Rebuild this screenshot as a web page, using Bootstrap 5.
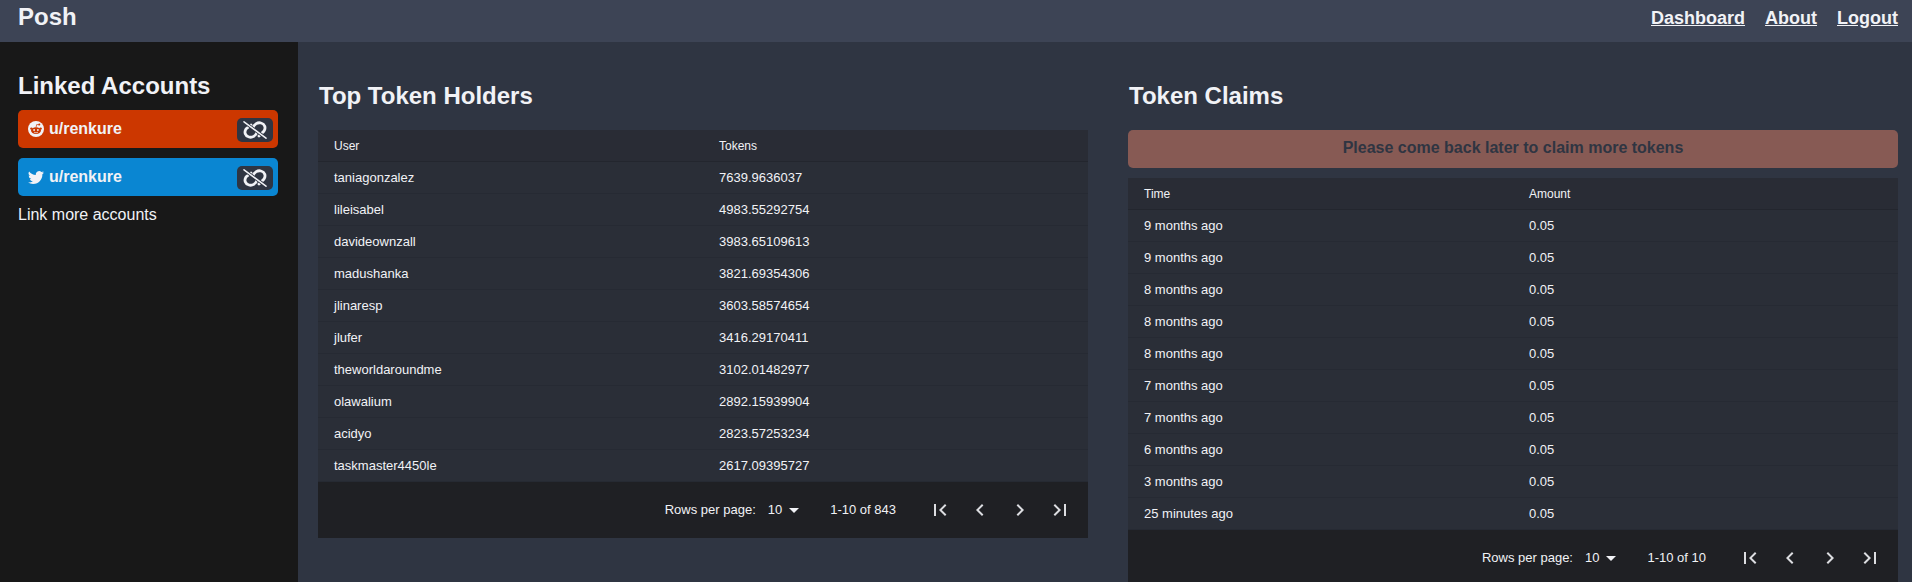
<!DOCTYPE html>
<html lang="en"><head><meta charset="utf-8"><title>Posh</title>
<link href="https://cdn.jsdelivr.net/npm/bootstrap@5.3.0/dist/css/bootstrap.min.css" rel="stylesheet">
<style>
html,body{height:582px;overflow:hidden}
body{font-family:"Liberation Sans",Arial,sans-serif;background:#2f3542;color:#f1f2f6}
.topbar{height:42px;background:#3d4455;padding:0 14px 0 18px}
.brand-name{font-size:24px;font-weight:700;color:#f1f2f6;line-height:34px}
.toplink{font-size:18px;font-weight:700;color:#f1f2f6;text-decoration:underline;line-height:36px}
.toplink:hover{color:#f1f2f6}
.nav-gap{gap:20px}
.shell{height:540px}
.side{width:298px;background:#181818;padding:30px 20px 0 18px;flex:none}
.side-title{font-size:24px;font-weight:700;line-height:28px;margin:0 0 10px}
.acct{height:38px;border-radius:5px;margin-bottom:10px;padding:0 5px 0 10px;color:#f1f2f6;font-size:16px;font-weight:700}
.acct-r{background:#cc3700}
.acct-t{background:#0a86d2}
.acct-name{gap:5px}
.unlink-btn{width:36px;height:24px;background:#2f3542;border-radius:5px;border:0;padding:0;margin-top:2px}
.more{font-size:16px;color:#f1f2f6;line-height:18px}
.content{padding:0 14px 0 20px;gap:40px;min-width:0}
.pane{width:770px;flex:none}
.pane-title{font-size:24px;font-weight:700;line-height:28px;margin:0;padding:40px 0 20px 1px}
.claim{height:38px;background:#875a54;color:#2f3542;font-size:16px;font-weight:700;border-radius:5px;text-align:center;line-height:36px;margin-bottom:10px}
.dtable{width:100%;table-layout:fixed;border-collapse:separate;border-spacing:0;background:#2a2e37}
.dtable th{height:32px;font-size:12px;font-weight:400;padding:0 16px;background:#292c35;border-bottom:1px solid #23262e;color:#f1f2f6}
.dtable td{height:32px;font-size:13px;padding:0 16px;border-bottom:1px solid #262a33;color:#f1f2f6}
.pager{height:56px;background:#1f2024;font-size:13px;color:#f1f2f6;padding-right:8px}
.rpp-label{margin:0 4px}
.rpp{margin-left:8px}
.rng{margin:0 24px}
.pg-btn{width:40px;height:40px;background:none;border:0;padding:8px;line-height:0}
.pg-btn svg{fill:#f1f2f6;opacity:.9}
</style></head><body>
<nav class="topbar d-flex justify-content-between align-items-start">
<span class="brand-name">Posh</span>
<div class="d-flex nav-gap"><a class="toplink" href="#">Dashboard</a><a class="toplink" href="#">About</a><a class="toplink" href="#">Logout</a></div>
</nav>
<div class="shell d-flex">
<aside class="side">
<h2 class="side-title">Linked Accounts</h2>
<div class="acct acct-r d-flex align-items-center justify-content-between">
<span class="d-flex align-items-center acct-name">
<svg width="16" height="16" viewBox="0 0 16 16"><circle cx="8" cy="8" r="8" fill="#f1f2f6"/><ellipse cx="8" cy="9.600" rx="5" ry="3.300" fill="#cc3700"/><circle cx="3.400" cy="7.600" r="1.200" fill="#cc3700"/><circle cx="12.600" cy="7.600" r="1.200" fill="#cc3700"/><circle cx="11.300" cy="3.600" r="1" fill="#cc3700"/><path d="M8 6.500 8.700 3.500 11 3.800" stroke="#cc3700" stroke-width=".7" fill="none"/><circle cx="6.100" cy="9" r=".9" fill="#f1f2f6"/><circle cx="9.900" cy="9" r=".9" fill="#f1f2f6"/><path d="M6 11.200q2 1.200 4 0" stroke="#f1f2f6" stroke-width=".7" fill="none"/></svg>
u/renkure</span>
<button class="unlink-btn d-flex align-items-center justify-content-center" aria-label="Unlink"><svg width="24" height="18" viewBox="0 0 24 18" fill="none" stroke-linecap="round"><path d="M10 7C11 3 15 1 18 2 22 3 23 7 21 10L16 15" stroke="#f1f2f6" stroke-width="2.800"/><path d="M14 11C13 15 9 17 6 16 2 15 1 11 3 8L8 4" stroke="#f1f2f6" stroke-width="2.800"/><path d="M1 1 23 17" stroke="#2f3542" stroke-width="3.400"/><path d="M1 .8 23 17.200" stroke="#f1f2f6" stroke-width="1.500"/></svg></button>
</div>
<div class="acct acct-t d-flex align-items-center justify-content-between">
<span class="d-flex align-items-center acct-name">
<svg width="16" height="16" viewBox="0 0 16 16" fill="#f1f2f6"><path d="M5.026 15c6.038 0 9.341-5.003 9.341-9.334 0-.14 0-.282-.006-.422A6.685 6.685 0 0 0 16 3.542a6.658 6.658 0 0 1-1.889.518 3.301 3.301 0 0 0 1.447-1.817 6.533 6.533 0 0 1-2.087.793A3.286 3.286 0 0 0 7.875 6.030a9.325 9.325 0 0 1-6.767-3.429 3.289 3.289 0 0 0 1.018 4.382A3.323 3.323 0 0 1 .64 6.575v.045a3.288 3.288 0 0 0 2.632 3.218 3.203 3.203 0 0 1-.865.115 3.230 3.230 0 0 1-.614-.057 3.283 3.283 0 0 0 3.067 2.277A6.588 6.588 0 0 1 .78 13.580a6.320 6.320 0 0 1-.78-.045A9.344 9.344 0 0 0 5.026 15z"/></svg>
u/renkure</span>
<button class="unlink-btn d-flex align-items-center justify-content-center" aria-label="Unlink"><svg width="24" height="18" viewBox="0 0 24 18" fill="none" stroke-linecap="round"><path d="M10 7C11 3 15 1 18 2 22 3 23 7 21 10L16 15" stroke="#f1f2f6" stroke-width="2.800"/><path d="M14 11C13 15 9 17 6 16 2 15 1 11 3 8L8 4" stroke="#f1f2f6" stroke-width="2.800"/><path d="M1 1 23 17" stroke="#2f3542" stroke-width="3.400"/><path d="M1 .8 23 17.200" stroke="#f1f2f6" stroke-width="1.500"/></svg></button>
</div>
<div class="more">Link more accounts</div>
</aside>
<main class="content d-flex flex-grow-1">
<section class="pane">
<h2 class="pane-title">Top Token Holders</h2>
<table class="dtable"><thead><tr><th>User</th><th>Tokens</th></tr></thead><tbody>
<tr><td>taniagonzalez</td><td>7639.9636037</td></tr>
<tr><td>lileisabel</td><td>4983.55292754</td></tr>
<tr><td>davideownzall</td><td>3983.65109613</td></tr>
<tr><td>madushanka</td><td>3821.69354306</td></tr>
<tr><td>jlinaresp</td><td>3603.58574654</td></tr>
<tr><td>jlufer</td><td>3416.29170411</td></tr>
<tr><td>theworldaroundme</td><td>3102.01482977</td></tr>
<tr><td>olawalium</td><td>2892.15939904</td></tr>
<tr><td>acidyo</td><td>2823.57253234</td></tr>
<tr><td>taskmaster4450le</td><td>2617.09395727</td></tr>
</tbody></table>
<div class="pager d-flex align-items-center justify-content-end">
<span class="rpp-label">Rows per page:</span>
<span class="rpp d-flex align-items-center">10<svg width="24" height="24" viewBox="0 0 24 24" fill="#f1f2f6"><path d="M7 10l5 5 5-5z"/></svg></span>
<span class="rng">1-10 of 843</span>
<div class="d-flex">
<button class="pg-btn" aria-label="First"><svg width="24" height="24" viewBox="0 0 24 24"><path d="M18.41 16.59L13.82 12l4.59-4.59L17 6l-6 6 6 6zM6 6h2v12H6z"/></svg></button>
<button class="pg-btn" aria-label="Previous"><svg width="24" height="24" viewBox="0 0 24 24"><path d="M15.41 7.41L14 6l-6 6 6 6 1.41-1.41L10.83 12z"/></svg></button>
<button class="pg-btn" aria-label="Next"><svg width="24" height="24" viewBox="0 0 24 24"><path d="M10 6L8.59 7.41 13.17 12l-4.58 4.59L10 18l6-6z"/></svg></button>
<button class="pg-btn" aria-label="Last"><svg width="24" height="24" viewBox="0 0 24 24"><path d="M5.59 7.41L10.18 12l-4.59 4.59L7 18l6-6-6-6zM16 6h2v12h-2z"/></svg></button>
</div></div>
</section>
<section class="pane">
<h2 class="pane-title">Token Claims</h2>
<div class="claim">Please come back later to claim more tokens</div>
<table class="dtable"><thead><tr><th>Time</th><th>Amount</th></tr></thead><tbody>
<tr><td>9 months ago</td><td>0.05</td></tr>
<tr><td>9 months ago</td><td>0.05</td></tr>
<tr><td>8 months ago</td><td>0.05</td></tr>
<tr><td>8 months ago</td><td>0.05</td></tr>
<tr><td>8 months ago</td><td>0.05</td></tr>
<tr><td>7 months ago</td><td>0.05</td></tr>
<tr><td>7 months ago</td><td>0.05</td></tr>
<tr><td>6 months ago</td><td>0.05</td></tr>
<tr><td>3 months ago</td><td>0.05</td></tr>
<tr><td>25 minutes ago</td><td>0.05</td></tr>
</tbody></table>
<div class="pager d-flex align-items-center justify-content-end">
<span class="rpp-label">Rows per page:</span>
<span class="rpp d-flex align-items-center">10<svg width="24" height="24" viewBox="0 0 24 24" fill="#f1f2f6"><path d="M7 10l5 5 5-5z"/></svg></span>
<span class="rng">1-10 of 10</span>
<div class="d-flex">
<button class="pg-btn" aria-label="First"><svg width="24" height="24" viewBox="0 0 24 24"><path d="M18.41 16.59L13.82 12l4.59-4.59L17 6l-6 6 6 6zM6 6h2v12H6z"/></svg></button>
<button class="pg-btn" aria-label="Previous"><svg width="24" height="24" viewBox="0 0 24 24"><path d="M15.41 7.41L14 6l-6 6 6 6 1.41-1.41L10.83 12z"/></svg></button>
<button class="pg-btn" aria-label="Next"><svg width="24" height="24" viewBox="0 0 24 24"><path d="M10 6L8.59 7.41 13.17 12l-4.58 4.59L10 18l6-6z"/></svg></button>
<button class="pg-btn" aria-label="Last"><svg width="24" height="24" viewBox="0 0 24 24"><path d="M5.59 7.41L10.18 12l-4.59 4.59L7 18l6-6-6-6zM16 6h2v12h-2z"/></svg></button>
</div></div>
</section>
</main>
</div>
<script src="https://cdn.jsdelivr.net/npm/bootstrap@5.3.0/dist/js/bootstrap.bundle.min.js"></script>
</body></html>
